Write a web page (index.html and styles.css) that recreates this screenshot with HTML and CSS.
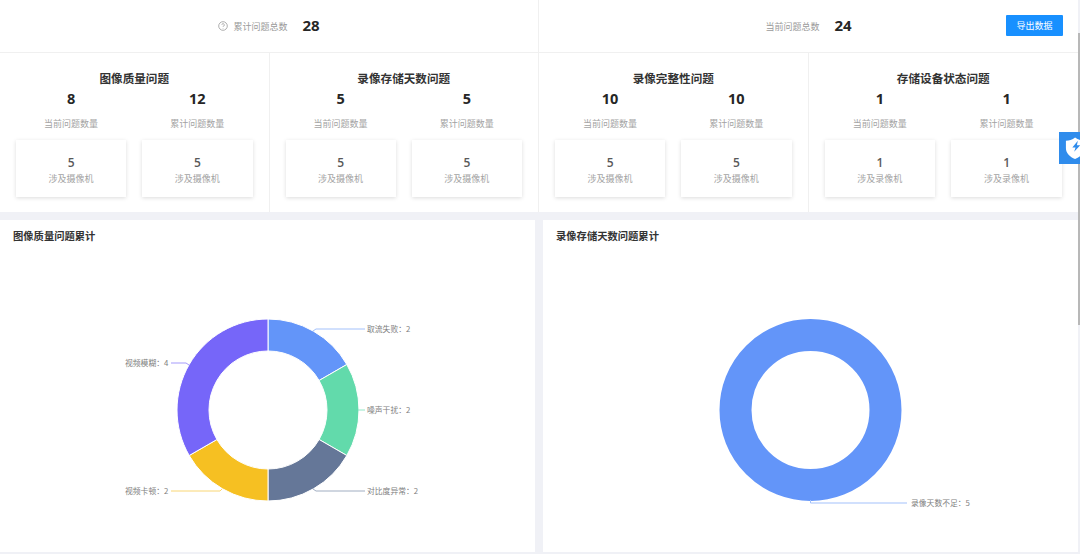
FILE: index.html
```html
<!DOCTYPE html>
<html lang="zh-CN">
<head>
<meta charset="utf-8">
<title>问题统计</title>
<link rel="stylesheet" href="styles.css">
</head>
<body>
<div class="page">
  <header class="totals">
    <div class="total total-left">
      <svg class="help" viewBox="0 0 10 10"><circle cx="5" cy="5" r="4.3"/><path d="M3.8 3.9a1.25 1.25 0 1 1 1.9 1.1c-.5.3-.7.5-.7 1"/><path d="M5 7.100v.5"/></svg>
      <span class="total-label">累计问题总数</span>
      <b class="total-num">28</b>
    </div>
    <div class="total total-right">
      <span class="total-label">当前问题总数</span>
      <b class="total-num">24</b>
      <button class="export">导出数据</button>
    </div>
  </header>

  <section class="stats">
    <div class="col">
      <h2>图像质量问题</h2>
      <div class="pair"><div><b>8</b><span>当前问题数量</span></div><div><b>12</b><span>累计问题数量</span></div></div>
      <div class="pair cards"><div class="card"><b>5</b><span>涉及摄像机</span></div><div class="card"><b>5</b><span>涉及摄像机</span></div></div>
    </div>
    <div class="col">
      <h2>录像存储天数问题</h2>
      <div class="pair"><div><b>5</b><span>当前问题数量</span></div><div><b>5</b><span>累计问题数量</span></div></div>
      <div class="pair cards"><div class="card"><b>5</b><span>涉及摄像机</span></div><div class="card"><b>5</b><span>涉及摄像机</span></div></div>
    </div>
    <div class="col">
      <h2>录像完整性问题</h2>
      <div class="pair"><div><b>10</b><span>当前问题数量</span></div><div><b>10</b><span>累计问题数量</span></div></div>
      <div class="pair cards"><div class="card"><b>5</b><span>涉及摄像机</span></div><div class="card"><b>5</b><span>涉及摄像机</span></div></div>
    </div>
    <div class="col">
      <h2>存储设备状态问题</h2>
      <div class="pair"><div><b>1</b><span>当前问题数量</span></div><div><b>1</b><span>累计问题数量</span></div></div>
      <div class="pair cards"><div class="card"><b>1</b><span>涉及录像机</span></div><div class="card"><b>1</b><span>涉及录像机</span></div></div>
    </div>
  </section>

  <section class="charts">
    <article class="chart">
      <h3>图像质量问题累计</h3>
      <svg class="plot" viewBox="0 252 535 300">
        <g class="slices">
          <path fill="#6395f9" d="M268 319A91 91 0 0 1 346.8 364.5L319.1 380.5A59 59 0 0 0 268 351Z"/>
          <path fill="#62daab" d="M346.8 364.5A91 91 0 0 1 346.8 455.5L319.1 439.5A59 59 0 0 0 319.1 380.5Z"/>
          <path fill="#657798" d="M346.8 455.5A91 91 0 0 1 268 501L268 469A59 59 0 0 0 319.1 439.5Z"/>
          <path fill="#f6c022" d="M268 501A91 91 0 0 1 189.2 455.5L216.9 439.5A59 59 0 0 0 268 469Z"/>
          <path fill="#7666f9" d="M189.2 455.5A91 91 0 0 1 268 319L268 351A59 59 0 0 0 216.9 439.5Z"/>
        </g>
        <g class="leaders">
          <path stroke="#a3c1fb" d="M313 331L316 329H365"/>
          <path stroke="#92e8c7" d="M358 410H365"/>
          <path stroke="#a0adc1" d="M313 489L316 491H365"/>
          <path stroke="#f9d675" d="M171 491H220L222 489"/>
          <path stroke="#a59bfb" d="M171 363H186L189 365"/>
        </g>
        <g class="labels">
          <text x="367" y="332">取流失败：2</text>
          <text x="367" y="413">噪声干扰：2</text>
          <text x="367" y="494">对比度异常：2</text>
          <text x="125" y="494">视频卡顿：2</text>
          <text x="125" y="366">视频模糊：4</text>
        </g>
      </svg>
    </article>
    <article class="chart">
      <h3>录像存储天数问题累计</h3>
      <svg class="plot" viewBox="543 252 535 300">
        <circle class="ring" cx="810.500" cy="410" r="75"/>
        <g class="leaders"><path stroke="#a3c1fb" d="M810.500 500V503H907"/></g>
        <g class="labels"><text x="911" y="506">录像天数不足：5</text></g>
      </svg>
    </article>
  </section>
</div>

<div class="scroll-thumb"></div>
<div class="shield-tab">
  <svg viewBox="0 0 24 26"><path fill="#fff" d="M11 1.500C14 4 17.500 5 21 5.200V13c0 6-4.500 9.800-10 12C5.500 22.800 1 19 1 13V5.200C4.500 5 8 4 11 1.500Z"/><path fill="#2f8cec" d="M14 5L8 12.500h3.500L10 17 16.500 10h-3.500Z"/></svg>
</div>
</body>
</html>
```

FILE: styles.css
```css
* { box-sizing: border-box; }
html, body { margin: 0; padding: 0; height: 554px; overflow: hidden; }
body {
  background: #f0f1f6;
  color: #262626;
  font-family: "Open Sans", "Noto Sans CJK SC", sans-serif;
}
.page { width: 1078px; }

.totals {
  display: flex;
  height: 53px;
  background: #fff;
  border-bottom: 1px solid #f0f0f0;
}
.total {
  flex: 1;
  display: flex;
  align-items: center;
  justify-content: center;
  gap: 15px;
  position: relative;
}
.total-left { flex: 0 0 539px; border-right: 1px solid #f0f0f0; }
.total-label { font-size: 9px; color: #9a9a9a; }
.total-num { font-size: 15px; font-weight: 700; color: #262626; margin-top: -2px; }
.total-left .total-label { margin-left: -10px; }
.help { width: 10px; height: 10px; fill: none; stroke: #8c8c8c; stroke-width: .7; }
.export {
  position: absolute;
  right: 15px;
  top: 15px;
  width: 57px;
  height: 21px;
  padding: 0;
  border: 0;
  border-radius: 1px;
  background: #1890ff;
  color: #fff;
  font: 9px "Noto Sans CJK SC", sans-serif;
}

.stats {
  display: grid;
  grid-template-columns: repeat(4, 1fr);
  height: 159px;
  background: #fff;
}
.col {
  padding: 18px 16px 0;
  border-right: 1px solid #f0f0f0;
}
.col:last-child { border-right: 0; }
.col h2 {
  margin: 0;
  height: 16px;
  line-height: 16px;
  font-size: 11.600px;
  font-weight: 700;
  text-align: center;
  color: #333;
}
.pair {
  display: grid;
  grid-template-columns: 1fr 1fr;
  gap: 16px;
  text-align: center;
}
.pair b {
  display: block;
  margin-top: 2px;
  height: 20px;
  line-height: 20px;
  font-size: 14.500px;
  font-weight: 700;
}
.pair span {
  display: block;
  margin-top: 8px;
  height: 14px;
  line-height: 14px;
  font-size: 9px;
  color: #a3a3a3;
}
.cards { margin-top: 9px; }
.card {
  height: 57px;
  padding-top: 14px;
  background: #fff;
  box-shadow: 0 1px 4px rgba(0, 0, 0, .14);
}
.card b {
  margin: 0;
  height: 18px;
  line-height: 18px;
  font-size: 12px;
  font-weight: 600;
  color: #595959;
}
.card span { margin-top: 0; }

.charts {
  display: grid;
  grid-template-columns: 535px 535px;
  gap: 8px;
  margin-top: 8px;
}
.chart { height: 332px; background: #fff; }
.chart h3 {
  margin: 0;
  height: 32px;
  padding: 9px 0 0 13px;
  line-height: 14px;
  font-size: 10.300px;
  font-weight: 700;
  color: #333;
}
.plot { display: block; width: 535px; height: 300px; }
.slices path { stroke: #fff; stroke-width: 1; }
.ring { fill: none; stroke: #6395f9; stroke-width: 32; }
.leaders path { fill: none; stroke-width: 1; }
.labels text {
  font-family: "Noto Sans CJK SC", "Open Sans", sans-serif;
  font-size: 7.800px;
  fill: #808080;
}

.scroll-thumb {
  position: absolute;
  top: 33px;
  right: 0;
  width: 2px;
  height: 292px;
  background: #b8b8b8;
}
.shield-tab {
  position: absolute;
  top: 132px;
  left: 1059px;
  width: 21px;
  height: 32px;
  overflow: hidden;
  padding: 4px 0 0 6px;
  background: #2f8cec;
}
.shield-tab svg { display: block; width: 22px; height: 24px; }
```
